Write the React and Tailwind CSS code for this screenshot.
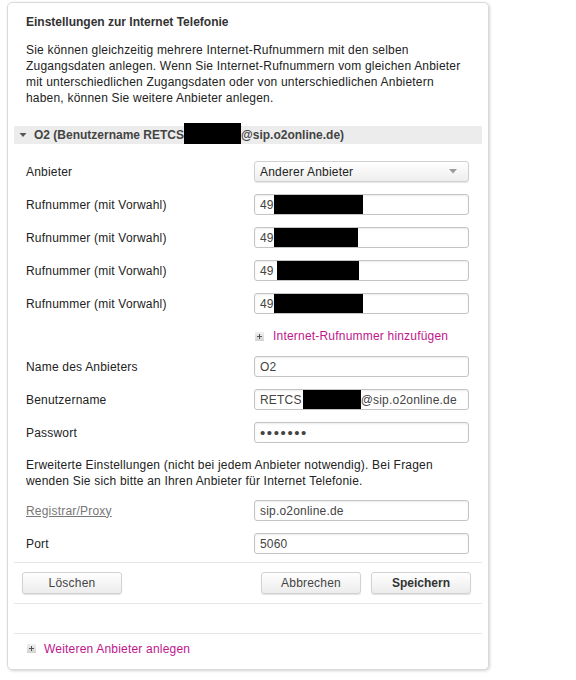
import React from "react";

const font = "font-['Liberation_Sans',Arial,sans-serif]";

function Redact({ w, className = "" }) {
  return <span className={`inline-block bg-black h-[19px] align-middle ${className}`} style={{ width: w }} />;
}

function Field({ children }) {
  return (
    <div className="w-[215px] h-[21px] border border-[#c4c4c4] rounded-[3px] bg-white shadow-[inset_0_1px_2px_rgba(0,0,0,0.08)] flex items-center pl-[5px] text-[#444] overflow-hidden whitespace-nowrap">
      {children}
    </div>
  );
}

function Row({ label, children, muted, className = "mt-[12px]" }) {
  return (
    <div className={`flex items-center h-[21px] ${className}`}>
      <div className={`w-[240px] pl-[12px] ${muted ? "text-[#777] underline" : "text-[#222]"}`}>{label}</div>
      {children}
    </div>
  );
}

function PlusBox() {
  return (
    <svg width="9" height="9" viewBox="0 0 9 9" className="shrink-0">
      <defs>
        <linearGradient id="pb" x1="0" y1="0" x2="0" y2="1">
          <stop offset="0" stopColor="#f0f0f0" />
          <stop offset="1" stopColor="#d2d2d2" />
        </linearGradient>
      </defs>
      <rect x="0" y="0" width="9" height="9" fill="url(#pb)" />
      <path d="M2 4.5 H7 M4.5 2 V7" stroke="#555" strokeWidth="1" />
    </svg>
  );
}

function Button({ children, bold }) {
  return (
    <button className={`h-[22px] w-[100px] border border-[#d2d2d2] rounded-[3px] bg-gradient-to-b from-white to-[#ececec] shadow-[0_1px_1px_rgba(0,0,0,0.12)] text-[12px] ${bold ? "font-bold text-[#333] tracking-normal" : "text-[#444]"}`}>
      {children}
    </button>
  );
}

export default function App() {
  return (
    <div className={`w-[576px] h-[680px] bg-white ${font} text-[12px] leading-[16px] tracking-[0.2px]`}>
      <div className="ml-[7px] pt-[2px]">
        <div className="w-[482px] h-[668px] border border-[#dadada] rounded-[5px] shadow-[1px_1px_3px_rgba(0,0,0,0.18)] px-[6px] flex flex-col">
          <div className="pl-[12px] pt-[11px] font-bold text-[#333] tracking-normal">Einstellungen zur Internet Telefonie</div>
          <p className="pl-[12px] mt-[12px] text-[#222] whitespace-nowrap">
            Sie können gleichzeitig mehrere Internet-Rufnummern mit den selben<br />
            Zugangsdaten anlegen. Wenn Sie Internet-Rufnummern vom gleichen Anbieter<br />
            mit unterschiedlichen Zugangsdaten oder von unterschiedlichen Anbietern<br />
            haben, können Sie weitere Anbieter anlegen.
          </p>

          <div className="mt-[20px] h-[18px] bg-[#ececec] flex items-center pl-[5px] font-bold text-[#444] whitespace-nowrap tracking-normal">
            <svg width="8" height="6" viewBox="0 0 8 6" className="mr-[7px]">
              <path d="M0.5 1 L7.5 1 L4 5 Z" fill="#555" />
            </svg>
            <span>O2 (Benutzername RETCS</span>
            <span className="inline-block bg-black w-[57px] h-[21px] -mt-[3px]" />
            <span>@sip.o2online.de)</span>
          </div>

          <Row label="Anbieter" className="mt-[17px]">
            <div className="w-[215px] h-[21px] border border-[#d0d0d0] rounded-[3px] bg-gradient-to-b from-white to-[#eeeeee] shadow-[0_1px_1px_rgba(0,0,0,0.1)] flex items-center justify-between pl-[5px] pr-[11px] text-[#222]">
              <span>Anderer Anbieter</span>
              <svg width="8" height="5" viewBox="0 0 8 5">
                <path d="M0 0 L8 0 L4 4.5 Z" fill="#9a9a9a" />
              </svg>
            </div>
          </Row>
          <Row label="Rufnummer (mit Vorwahl)">
            <Field>49<Redact w={89} /></Field>
          </Row>
          <Row label="Rufnummer (mit Vorwahl)">
            <Field>49<Redact w={84} /></Field>
          </Row>
          <Row label="Rufnummer (mit Vorwahl)">
            <Field>49<Redact w={82} className="ml-[3px]" /></Field>
          </Row>
          <Row label="Rufnummer (mit Vorwahl)">
            <Field>49<Redact w={89} /></Field>
          </Row>

          <div className="mt-[12px] h-[20px] flex items-center pl-[241px] gap-[9px] text-[#c0168c]">
            <PlusBox />
            <span>Internet-Rufnummer hinzufügen</span>
          </div>

          <Row label="Name des Anbieters" className="mt-[10px]">
            <Field>O2</Field>
          </Row>
          <Row label="Benutzername">
            <Field>RETCS<Redact w={58} className="ml-[1px]" />@sip.o2online.de</Field>
          </Row>
          <Row label="Passwort">
            <Field><span className="text-[15px] tracking-[1.6px] text-[#444]">•••••••</span></Field>
          </Row>

          <p className="pl-[12px] mt-[14px] text-[#222] whitespace-nowrap">
            Erweiterte Einstellungen (nicht bei jedem Anbieter notwendig). Bei Fragen<br />
            wenden Sie sich bitte an Ihren Anbieter für Internet Telefonie.
          </p>

          <Row label="Registrar/Proxy" muted className="mt-[11px]">
            <Field>sip.o2online.de</Field>
          </Row>
          <Row label="Port">
            <Field>5060</Field>
          </Row>

          <div className="mt-[8px] border-t border-[#e6e6e6] pt-[9px] pb-[9px] flex items-center pl-[8px] pr-[11px]">
            <Button>Löschen</Button>
            <div className="ml-auto flex gap-[10px]">
              <Button>Abbrechen</Button>
              <Button bold>Speichern</Button>
            </div>
          </div>
          <div className="h-[30px] border-t border-[#e6e6e6]" />
          <div className="border-t border-[#e6e6e6] h-[30px] flex items-center pl-[13px] gap-[8px] text-[#c0168c]">
            <PlusBox />
            <span>Weiteren Anbieter anlegen</span>
          </div>
        </div>
      </div>
    </div>
  );
}
